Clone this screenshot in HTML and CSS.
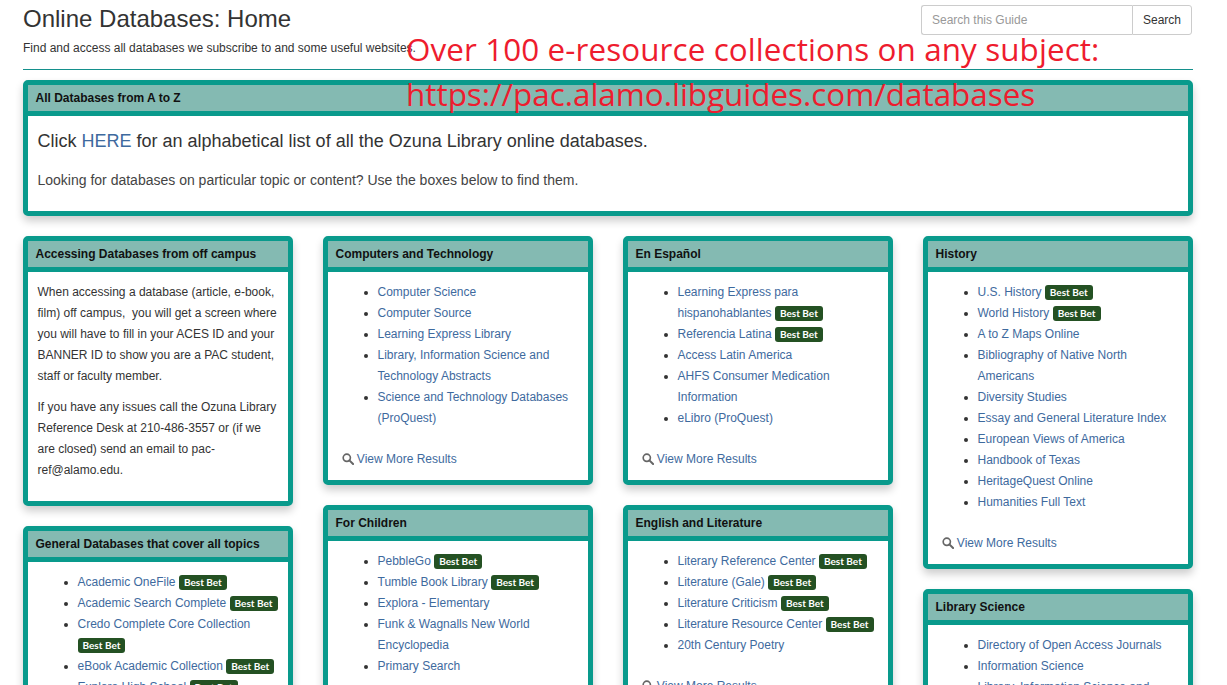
FILE: index.html
```html
<!DOCTYPE html>
<html lang="en">
  <head>
    <meta charset="UTF-8" />
    <meta name="viewport" content="width=device-width, initial-scale=1.0" />
    <title>Online Databases: Home</title>
    <link rel="stylesheet" href="styles.css">
  </head>
  <body>
    <svg class="icon-defs" width="0" height="0" aria-hidden="true">
      <symbol id="icon-search" viewBox="0 0 13 13">
        <circle cx="5.2" cy="5.2" r="3.9" fill="none" stroke="currentColor" stroke-width="1.8" />
        <path d="M8 8l4 4" fill="none" stroke="currentColor" stroke-width="2.2" stroke-linecap="round" />
      </symbol>
    </svg>
    <div class="page">
      <div class="page-header">
        <div class="titles">
          <h1>Online Databases: Home</h1>
          <p class="subtitle">Find and access all databases we subscribe to and some useful websites.</p>
        </div>
        <form class="search-form">
          <input class="search-input" type="text" placeholder="Search this Guide">
          <button class="search-button" type="button">Search</button>
        </form>
      </div>

      <div class="panel panel-wide">
        <div class="panel-heading">All Databases from A to Z</div>
        <div class="panel-body wide-body">
          <p class="lead">Click <a href="#">HERE</a> for an alphabetical list of all the Ozuna Library online databases.</p>
          <p class="wide-note">Looking for databases on particular topic or content? Use the boxes below to find them.</p>
        </div>
      </div>

      <div class="columns">
        <div class="column">
          <div class="panel">
            <div class="panel-heading">Accessing Databases from off campus</div>
            <div class="panel-body text-body">
              <p>When accessing a database (article, e-book, film) off campus,&nbsp; you will get a screen where you will have to fill in your ACES ID and your BANNER ID to show you are a PAC student, staff or faculty member.</p>
              <p>If you have any issues call the Ozuna Library Reference Desk at 210-486-3557 or (if we are closed) send an email to pac-ref@alamo.edu.</p>
            </div>
          </div>
          <div class="panel">
            <div class="panel-heading">General Databases that cover all topics</div>
            <div class="panel-body">
              <ul>
                <li><a href="#">Academic OneFile</a> <span class="badge">Best Bet</span></li>
                <li><a href="#">Academic Search Complete</a> <span class="badge">Best Bet</span></li>
                <li><a href="#">Credo Complete Core Collection</a> <span class="badge">Best Bet</span></li>
                <li><a href="#">eBook Academic Collection</a> <span class="badge">Best Bet</span></li>
                <li><a href="#">Explora High School</a> <span class="badge">Best Bet</span></li>
              </ul>
            </div>
          </div>
        </div>

        <div class="column">
          <div class="panel">
            <div class="panel-heading">Computers and Technology</div>
            <div class="panel-body">
              <ul>
                <li><a href="#">Computer Science</a></li>
                <li><a href="#">Computer Source</a></li>
                <li><a href="#">Learning Express Library</a></li>
                <li><a href="#">Library, Information Science and Technology Abstracts</a></li>
                <li><a href="#">Science and Technology Databases (ProQuest)</a></li>
              </ul>
              <div class="more"><svg class="more-icon"><use href="#icon-search" /></svg> <a href="#">View More Results</a></div>
            </div>
          </div>
          <div class="panel">
            <div class="panel-heading">For Children</div>
            <div class="panel-body">
              <ul>
                <li><a href="#">PebbleGo</a> <span class="badge">Best Bet</span></li>
                <li><a href="#">Tumble Book Library</a> <span class="badge">Best Bet</span></li>
                <li><a href="#">Explora - Elementary</a></li>
                <li><a href="#">Funk &amp; Wagnalls New World Encyclopedia</a></li>
                <li><a href="#">Primary Search</a></li>
              </ul>
              <div class="more"><svg class="more-icon"><use href="#icon-search" /></svg> <a href="#">View More Results</a></div>
            </div>
          </div>
        </div>

        <div class="column">
          <div class="panel">
            <div class="panel-heading">En Español</div>
            <div class="panel-body">
              <ul>
                <li><a href="#">Learning Express para hispanohablantes</a> <span class="badge">Best Bet</span></li>
                <li><a href="#">Referencia Latina</a> <span class="badge">Best Bet</span></li>
                <li><a href="#">Access Latin America</a></li>
                <li><a href="#">AHFS Consumer Medication Information</a></li>
                <li><a href="#">eLibro (ProQuest)</a></li>
              </ul>
              <div class="more"><svg class="more-icon"><use href="#icon-search" /></svg> <a href="#">View More Results</a></div>
            </div>
          </div>
          <div class="panel">
            <div class="panel-heading">English and Literature</div>
            <div class="panel-body">
              <ul>
                <li><a href="#">Literary Reference Center</a> <span class="badge">Best Bet</span></li>
                <li><a href="#">Literature (Gale)</a> <span class="badge">Best Bet</span></li>
                <li><a href="#">Literature Criticism</a> <span class="badge">Best Bet</span></li>
                <li><a href="#">Literature Resource Center</a> <span class="badge">Best Bet</span></li>
                <li><a href="#">20th Century Poetry</a></li>
              </ul>
              <div class="more"><svg class="more-icon"><use href="#icon-search" /></svg> <a href="#">View More Results</a></div>
            </div>
          </div>
        </div>

        <div class="column">
          <div class="panel">
            <div class="panel-heading">History</div>
            <div class="panel-body">
              <ul>
                <li><a href="#">U.S. History</a> <span class="badge">Best Bet</span></li>
                <li><a href="#">World History</a> <span class="badge">Best Bet</span></li>
                <li><a href="#">A to Z Maps Online</a></li>
                <li><a href="#">Bibliography of Native North Americans</a></li>
                <li><a href="#">Diversity Studies</a></li>
                <li><a href="#">Essay and General Literature Index</a></li>
                <li><a href="#">European Views of America</a></li>
                <li><a href="#">Handbook of Texas</a></li>
                <li><a href="#">HeritageQuest Online</a></li>
                <li><a href="#">Humanities Full Text</a></li>
              </ul>
              <div class="more"><svg class="more-icon"><use href="#icon-search" /></svg> <a href="#">View More Results</a></div>
            </div>
          </div>
          <div class="panel">
            <div class="panel-heading">Library Science</div>
            <div class="panel-body">
              <ul>
                <li><a href="#">Directory of Open Access Journals</a></li>
                <li><a href="#">Information Science</a></li>
                <li><a href="#">Library, Information Science and Technology Abstracts</a></li>
              </ul>
            </div>
          </div>
        </div>
      </div>

      <div class="overlay-note">
        <div class="overlay-first">Over 100 e-resource collections on any subject:</div>
        <div>https://pac.alamo.libguides.com/databases</div>
      </div>
    </div>
  </body>
</html>
```

FILE: styles.css
```css
html,
body {
  margin: 0;
  height: 685px;
  overflow: hidden;
}
body {
  font-family: "Liberation Sans", Arial, sans-serif;
  font-size: 12px;
  line-height: 21px;
  color: #333;
  background-color: #fff;
}
a {
  color: #3e6a9e;
  text-decoration: none;
}
.icon-defs {
  display: block;
  height: 0;
}
.page {
  position: relative;
  height: 685px;
  overflow: hidden;
  padding: 0 34px 0 23px;
}
.page-header {
  display: flex;
  justify-content: space-between;
  height: 69px;
  border-bottom: 1px solid #14908c;
}
.titles h1 {
  margin: 5px 0 0;
  font-size: 24px;
  line-height: 28px;
  font-weight: 400;
}
.subtitle {
  margin: 6px 0 0;
  line-height: 18px;
}
.search-form {
  display: flex;
  margin: 5px 1px 0 0;
  height: 30px;
}
.search-input {
  box-sizing: border-box;
  width: 211px;
  height: 30px;
  padding: 5px 10px;
  border: 1px solid #ccc;
  border-right: none;
  border-radius: 3px 0 0 3px;
  font: 12px "Liberation Sans", Arial, sans-serif;
  color: #555;
}
.search-input::placeholder {
  color: #999;
}
.search-button {
  box-sizing: border-box;
  width: 60px;
  height: 30px;
  padding: 0;
  background: #fff;
  border: 1px solid #ccc;
  border-radius: 0 3px 3px 0;
  font: 12px "Liberation Sans", Arial, sans-serif;
  color: #333;
}
.panel {
  box-sizing: border-box;
  background: #fff;
  border: 5px solid #099a8c;
  border-radius: 5px;
  box-shadow: 0 5px 9px rgba(0, 0, 0, 0.2);
  margin-bottom: 20px;
}
.panel-wide {
  margin-top: 10px;
  height: 136px;
}
.panel-heading {
  height: 26px;
  padding: 0 7.5px;
  line-height: 26px;
  background: #84bab2;
  border-bottom: 5px solid #099a8c;
  color: #111;
  font-weight: 700;
}
.panel-body {
  padding: 10px 10px 5px 9.5px;
}
.lead {
  margin: 0;
  font-size: 18px;
  line-height: 30px;
}
.wide-note {
  margin: 14px 0 0;
  font-size: 14px;
  line-height: 20px;
  color: #444;
}
.columns {
  display: flex;
  gap: 30px;
  margin-top: 20px;
}
.column {
  flex: 0 0 270px;
  width: 270px;
}
.text-body {
  padding-bottom: 10px;
}
.text-body p {
  margin: 0 0 10px;
}
.panel ul {
  margin: 0 0 10px;
  padding: 0 0 0 40px;
}
.badge {
  display: inline-block;
  padding: 2px 5px 3px;
  background: #245123;
  color: #fff;
  border-radius: 3px;
  font-family: Lato, "Liberation Sans", sans-serif;
  font-size: 10px;
  line-height: 10px;
  font-weight: 700;
}
.more {
  margin-top: 20px;
  padding: 0 0 5px 4px;
}
.more-icon {
  width: 12px;
  height: 12px;
  color: #666;
  vertical-align: -2px;
}
.overlay-note {
  position: absolute;
  left: 406px;
  top: 26px;
  color: #ee1c2e;
  font-family: "Open Sans", sans-serif;
  font-size: 31.4px;
  line-height: 45px;
  white-space: nowrap;
}
.overlay-first {
  letter-spacing: 0.1px;
}
```
